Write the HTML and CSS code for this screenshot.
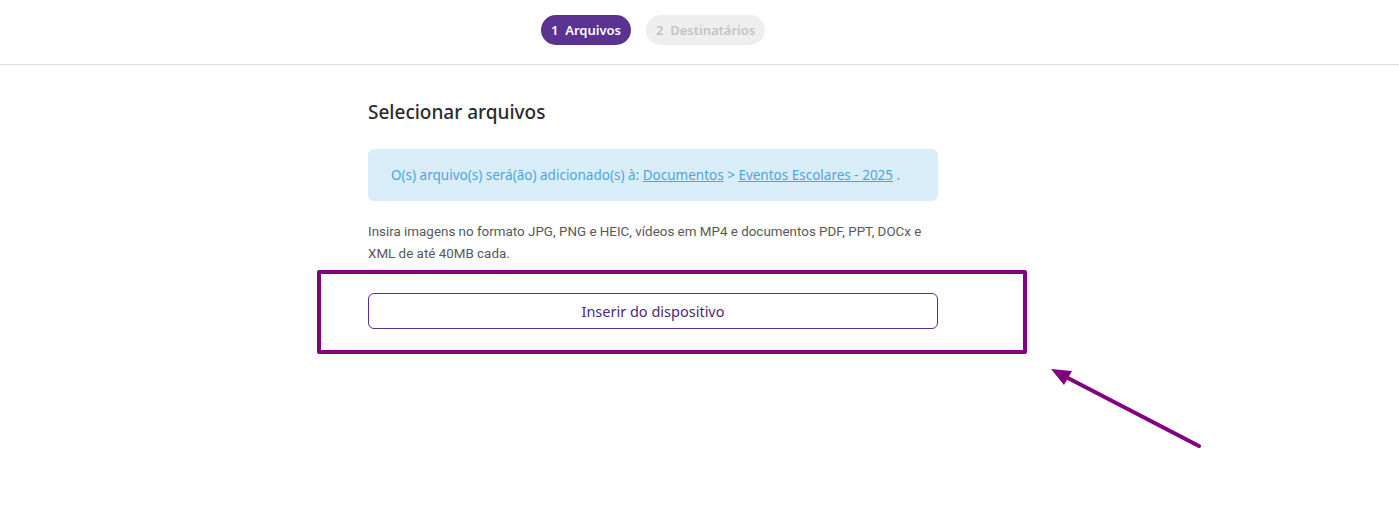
FILE: index.html
```html
<!DOCTYPE html>
<html lang="pt-BR">
<head>
    <meta charset="UTF-8">
    <title>Enviar arquivos</title>
    <link rel="stylesheet" href="styles.css">
</head>
<body>
    <header class="steps">
        <span class="step active">1&nbsp; Arquivos</span>
        <span class="step">2&nbsp; Destinatários</span>
    </header>

    <main class="content">
        <h1 class="title">Selecionar arquivos</h1>
        <div class="info">
            O(s) arquivo(s) será(ão) adicionado(s) à: <a href="#">Documentos</a> &gt; <a href="#">Eventos Escolares - 2025</a> .
        </div>
        <p class="hint">Insira imagens no formato JPG, PNG e HEIC, vídeos em MP4 e documentos PDF, PPT, DOCx e XML de até 40MB cada.</p>
        <button class="upload">Inserir do dispositivo</button>
    </main>

    <!-- marcação do print -->
    <div class="highlight"></div>
    <svg class="arrow" width="1399" height="511" viewBox="0 0 1399 511">
        <line x1="1199" y1="446" x2="1064" y2="376" stroke="#800080" stroke-width="4" stroke-linecap="round"/>
        <polygon points="1051,369 1072,371 1064,385" fill="#800080"/>
    </svg>
</body>
</html>
```

FILE: styles.css
```css
*{
    margin: 0;
    padding: 0;
    box-sizing: border-box;
}

body{
    background: #fff;
    font-family: "Noto Sans", "Lato", sans-serif;
    position: relative;
    height: 511px;
    overflow: hidden;
}

.steps{
    height: 65px;
    border-bottom: 1px solid #dcdcdc;
    display: flex;
    align-items: flex-start;
    gap: 15px;
    padding-top: 15px;
    padding-left: 541px;
}

.step{
    height: 30px;
    line-height: 30px;
    padding: 0 10px;
    border-radius: 15px;
    background: #eeeeee;
    color: #c4c4c4;
    font-size: 13px;
    font-weight: 600;
}
.step.active{
    background: #5b3290;
    color: #fff;
}

.content{
    width: 570px;
    padding-top: 34px;
    margin-left: 368px;
}

.title{
    font-size: 19px;
    font-weight: 500;
    color: #2b2b2b;
    line-height: 26px;
}

.info{
    margin-top: 24px;
    height: 52px;
    line-height: 52px;
    background: #d9edf8;
    border-radius: 6px;
    padding-left: 23px;
    font-size: 13.5px;
    color: #4ba6dc;
}
.info a{
    color: #4ba6dc;
}

.hint{
    margin-top: 20px;
    font-family: Roboto, sans-serif;
    font-size: 13.4px;
    line-height: 22px;
    color: #585858;
}

.upload{
    display: block;
    width: 100%;
    height: 36px;
    margin-top: 28px;
    background: #fff;
    border: 1px solid #5b2d91;
    border-radius: 6px;
    font-family: "Noto Sans", sans-serif;
    font-size: 14.5px;
    color: #4a2a78;
}

.highlight{
    position: absolute;
    left: 317px;
    top: 270px;
    width: 710px;
    height: 84px;
    border: 4px solid #800080;
    border-radius: 2px;
}

.arrow{
    position: absolute;
    left: 0;
    top: 0;
}
```
